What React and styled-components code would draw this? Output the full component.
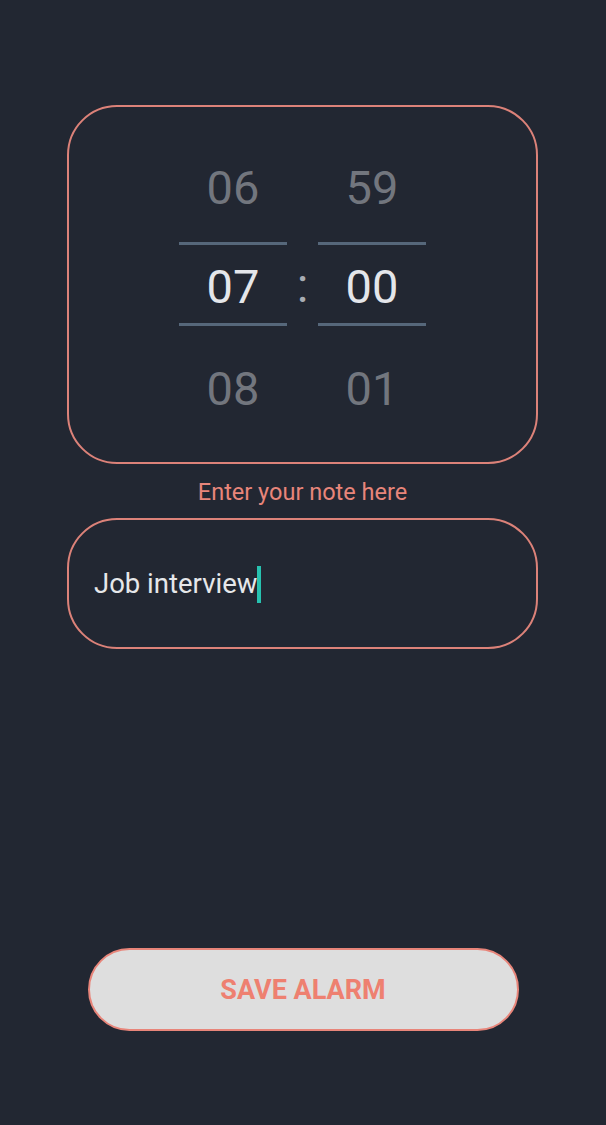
import React from "react";
import styled, { createGlobalStyle } from "styled-components";

const GlobalStyle = createGlobalStyle`
  html, body {
    margin: 0;
    padding: 0;
    background: #222732;
  }
  body {
    font-family: Roboto, "Liberation Sans", sans-serif;
  }
`;

const Screen = styled.div`
  width: 606px;
  height: 1125px;
  box-sizing: border-box;
  padding: 105px 68px 0 67px;
  display: flex;
  flex-direction: column;
  align-items: stretch;
`;

const PickerCard = styled.div`
  height: 359px;
  box-sizing: border-box;
  border: 2px solid #dc8279;
  border-radius: 50px;
  display: flex;
  justify-content: center;
  align-items: flex-start;
  padding-top: 25px;
`;

const Column = styled.div`
  width: 108px;
  display: flex;
  flex-direction: column;
  align-items: center;
`;

const cellHeights = { above: "110px", selected: "84px", below: "124px" };

const Cell = styled.div`
  width: 100%;
  height: ${({ $slot }) => cellHeights[$slot]};
  display: flex;
  align-items: center;
  justify-content: center;
  font-size: 47px;
  color: ${({ $slot }) => ($slot === "selected" ? "#e4e6ea" : "#72767e")};
  box-sizing: border-box;
  ${({ $slot }) =>
    $slot === "selected" &&
    `
    border-top: 3px solid #56677a;
    border-bottom: 3px solid #56677a;
    padding-top: 4px;
  `}
  ${({ $slot }) => $slot === "below" && `padding-top: 0px;`}
`;

const Colon = styled.div`
  width: 31px;
  margin-top: 110px;
  height: 84px;
  display: flex;
  align-items: center;
  justify-content: center;
  font-size: 48px;
  color: #a8acb3;
  padding-top: 2px;
  box-sizing: border-box;
`;

const NoteLabel = styled.div`
  margin-top: 15px;
  text-align: center;
  font-size: 23.5px;
  color: #e8857a;
  line-height: 26px;
`;

const NoteBox = styled.div`
  margin-top: 13px;
  height: 131px;
  box-sizing: border-box;
  border: 2px solid #dc8279;
  border-radius: 50px;
  display: flex;
  align-items: center;
  padding-left: 25px;
  font-size: 27.5px;
  font-weight: 400;
  color: #e6e7ea;
`;

const Caret = styled.span`
  display: inline-block;
  width: 4px;
  height: 37px;
  background: #27c2b0;
  margin-left: 0px;
  margin-top: 2px;
`;

const ButtonRow = styled.div`
  margin-top: 299px;
  display: flex;
  justify-content: center;
`;

const SaveButton = styled.button`
  width: 431px;
  height: 83px;
  box-sizing: border-box;
  border: 2px solid #e8857a;
  border-radius: 42px;
  background: #dedede;
  color: #ee8070;
  font-family: Roboto, "Liberation Sans", sans-serif;
  font-weight: 700;
  font-size: 27px;
  cursor: pointer;
  margin-left: 1px;
`;

const hours = ["06", "07", "08"];
const minutes = ["59", "00", "01"];
const slots = ["above", "selected", "below"];

export default function App() {
  return (
    <>
      <GlobalStyle />
      <Screen>
        <PickerCard>
          <Column>
            {hours.map((h, i) => (
              <Cell key={h} $slot={slots[i]}>
                {h}
              </Cell>
            ))}
          </Column>
          <Colon>:</Colon>
          <Column>
            {minutes.map((m, i) => (
              <Cell key={m} $slot={slots[i]}>
                {m}
              </Cell>
            ))}
          </Column>
        </PickerCard>
        <NoteLabel>Enter your note here</NoteLabel>
        <NoteBox>
          Job interview
          <Caret />
        </NoteBox>
        <ButtonRow>
          <SaveButton>SAVE ALARM</SaveButton>
        </ButtonRow>
      </Screen>
    </>
  );
}
